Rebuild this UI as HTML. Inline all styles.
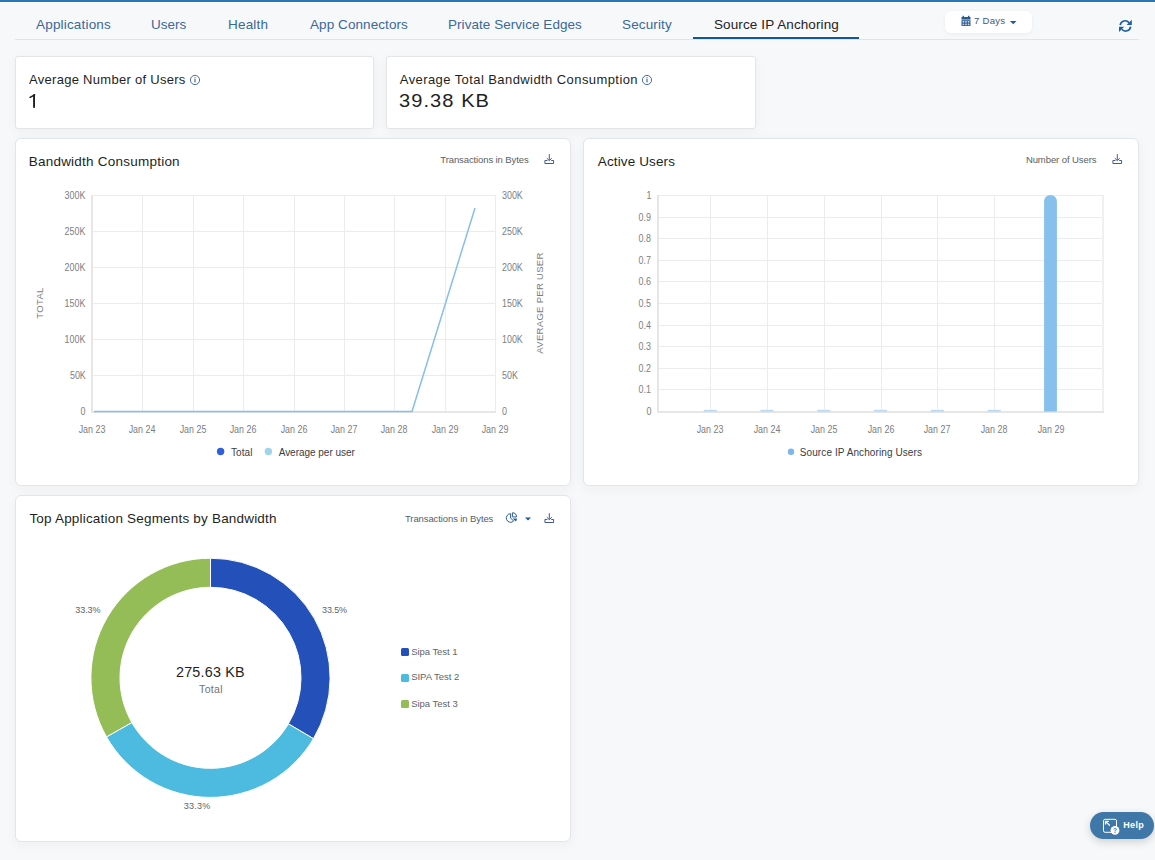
<!DOCTYPE html>
<html><head><meta charset="utf-8"><title>Source IP Anchoring</title>
<style>
html,body{margin:0;padding:0;}
body{width:1155px;height:860px;overflow:hidden;background:#f7f8fa;position:relative;font-family:'Liberation Sans', sans-serif;}
.t{position:absolute;white-space:nowrap;font-family:'Liberation Sans', sans-serif;}
.card{position:absolute;background:#fff;border:1px solid #e4e5e8;box-sizing:border-box;box-shadow:0 3px 12px rgba(30,40,50,0.045);}
svg{position:absolute;overflow:visible;}
</style></head><body>

<div style="position:absolute;left:0;top:0;width:1155px;height:2px;background:#2877b9"></div>
<div style="position:absolute;left:0;top:2px;width:1155px;height:1px;background:#ffffff"></div>
<div style="position:absolute;left:15px;top:39px;width:1124px;height:1px;background:#e1e3e6"></div>
<div style="position:absolute;left:693px;top:36px;width:166px;height:1px;background:#ffffff"></div>
<div style="position:absolute;left:693px;top:37px;width:166px;height:2px;background:#12559a"></div>
<div style="position:absolute;left:945px;top:11px;width:87px;height:22px;background:#fff;border-radius:6px;box-shadow:0 1px 4px rgba(0,0,0,0.05)"></div>
<svg style="left:961px;top:15px" width="10" height="12" viewBox="0 0 10 12">
<rect x="0.5" y="2" width="9" height="2.6" fill="#2a5a8f"/>
<rect x="1.6" y="0.8" width="1.4" height="2" fill="#2a5a8f"/><rect x="7" y="0.8" width="1.4" height="2" fill="#2a5a8f"/>
<rect x="0.5" y="5.2" width="9" height="5.8" fill="#2a5a8f"/>
<g fill="#c9d6e6"><rect x="1.6" y="6" width="1.6" height="1.6"/><rect x="4.2" y="6" width="1.6" height="1.6"/><rect x="6.8" y="6" width="1.6" height="1.6"/>
<rect x="1.6" y="8.6" width="1.6" height="1.6"/><rect x="4.2" y="8.6" width="1.6" height="1.6"/><rect x="6.8" y="8.6" width="1.6" height="1.6"/></g>
</svg>
<svg style="left:1010px;top:20px" width="7" height="5" viewBox="0 0 7 5"><path d="M0,1 L6.5,1 L3.25,4.2 Z" fill="#1f5a96"/></svg>
<svg style="left:1118px;top:19px" width="15" height="14" viewBox="0 0 15 14">
<path d="M2.2,6.2 A5,5 0 0 1 11,3.6" fill="none" stroke="#1d5f9f" stroke-width="1.7"/>
<path d="M13.8,0.8 L13.8,6 L8.6,6 Z" fill="#1d5f9f"/>
<path d="M12.6,7.6 A5,5 0 0 1 3.8,10.2" fill="none" stroke="#1d5f9f" stroke-width="1.7"/>
<path d="M1,13 L1,7.8 L6.2,7.8 Z" fill="#1d5f9f"/>
</svg>
<div class="card" style="left:15px;top:56px;width:359px;height:73px;border-radius:3px"></div>
<div class="card" style="left:386px;top:56px;width:370px;height:73px;border-radius:3px"></div>
<div class="card" style="left:15px;top:138px;width:556px;height:348px;border-radius:6px"></div>
<div class="card" style="left:583px;top:138px;width:556px;height:348px;border-radius:6px"></div>
<div class="card" style="left:15px;top:495px;width:556px;height:347px;border-radius:6px"></div>
<svg style="left:188.7px;top:74.2px" width="12" height="12" viewBox="0 0 12 12">
<circle cx="6" cy="6" r="4.6" fill="none" stroke="#35609a" stroke-width="0.9"/>
<rect x="5.45" y="5" width="1.1" height="3.4" fill="#35609a"/><rect x="5.45" y="3.3" width="1.1" height="1.1" fill="#35609a"/>
</svg>
<svg style="left:640.8px;top:74.2px" width="12" height="12" viewBox="0 0 12 12">
<circle cx="6" cy="6" r="4.6" fill="none" stroke="#35609a" stroke-width="0.9"/>
<rect x="5.45" y="5" width="1.1" height="3.4" fill="#35609a"/><rect x="5.45" y="3.3" width="1.1" height="1.1" fill="#35609a"/>
</svg>
<svg style="left:544px;top:154px" width="11" height="11" viewBox="0 0 11 11">
<path d="M5.3,0.2 L5.3,6.5 M2.8,4.2 L5.3,6.6 L7.8,4.2" fill="none" stroke="#3b4f91" stroke-width="0.95"/>
<path d="M3.4,6.5 L0.9,6.5 L0.9,9.5 L9.6,9.5 L9.6,6.5 L7.2,6.5" fill="none" stroke="#3b4f91" stroke-width="0.95"/>
</svg>
<svg style="left:1112px;top:154px" width="11" height="11" viewBox="0 0 11 11">
<path d="M5.3,0.2 L5.3,6.5 M2.8,4.2 L5.3,6.6 L7.8,4.2" fill="none" stroke="#3b4f91" stroke-width="0.95"/>
<path d="M3.4,6.5 L0.9,6.5 L0.9,9.5 L9.6,9.5 L9.6,6.5 L7.2,6.5" fill="none" stroke="#3b4f91" stroke-width="0.95"/>
</svg>
<svg style="left:544px;top:513px" width="11" height="11" viewBox="0 0 11 11">
<path d="M5.3,0.2 L5.3,6.5 M2.8,4.2 L5.3,6.6 L7.8,4.2" fill="none" stroke="#3b4f91" stroke-width="0.95"/>
<path d="M3.4,6.5 L0.9,6.5 L0.9,9.5 L9.6,9.5 L9.6,6.5 L7.2,6.5" fill="none" stroke="#3b4f91" stroke-width="0.95"/>
</svg>
<svg style="left:506px;top:511.5px" width="12" height="11" viewBox="0 0 12 11">
<path d="M4.6,1.7 A4.3,4.3 0 1 0 7.64,9.04 L4.6,6 Z" fill="none" stroke="#2d5d9a" stroke-width="1"/>
<path d="M6.4,0.8 L6.4,4.9 L10.5,4.9 A4.1,4.1 0 0 0 6.4,0.8 Z" fill="none" stroke="#2d5d9a" stroke-width="1"/>
<path d="M6.7,6.5 L11,6.5 A4.3,4.3 0 0 1 9.74,9.54 Z" fill="#2d5d9a"/>
</svg>
<svg style="left:525px;top:516.5px" width="7" height="5" viewBox="0 0 7 5"><path d="M0,0.5 L6,0.5 L3,3.5 Z" fill="#1f5a96"/></svg>
<svg style="left:0;top:0" width="1155" height="860" viewBox="0 0 1155 860">
<line x1="92" y1="195.5" x2="496" y2="195.5" stroke="#ececec" stroke-width="1"/>
<line x1="92" y1="231.5" x2="496" y2="231.5" stroke="#ececec" stroke-width="1"/>
<line x1="92" y1="267.5" x2="496" y2="267.5" stroke="#ececec" stroke-width="1"/>
<line x1="92" y1="303.5" x2="496" y2="303.5" stroke="#ececec" stroke-width="1"/>
<line x1="92" y1="339.5" x2="496" y2="339.5" stroke="#ececec" stroke-width="1"/>
<line x1="92" y1="375.5" x2="496" y2="375.5" stroke="#ececec" stroke-width="1"/>
<line x1="92" y1="411.5" x2="496" y2="411.5" stroke="#ececec" stroke-width="1"/>
<line x1="92.5" y1="195" x2="92.5" y2="412" stroke="#ececec" stroke-width="1"/>
<line x1="142.5" y1="195" x2="142.5" y2="412" stroke="#ececec" stroke-width="1"/>
<line x1="193.5" y1="195" x2="193.5" y2="412" stroke="#ececec" stroke-width="1"/>
<line x1="243.5" y1="195" x2="243.5" y2="412" stroke="#ececec" stroke-width="1"/>
<line x1="294.5" y1="195" x2="294.5" y2="412" stroke="#ececec" stroke-width="1"/>
<line x1="344.5" y1="195" x2="344.5" y2="412" stroke="#ececec" stroke-width="1"/>
<line x1="394.5" y1="195" x2="394.5" y2="412" stroke="#ececec" stroke-width="1"/>
<line x1="445.5" y1="195" x2="445.5" y2="412" stroke="#ececec" stroke-width="1"/>
<line x1="495.5" y1="195" x2="495.5" y2="412" stroke="#ececec" stroke-width="1"/>
<rect x="91" y="195" width="2" height="218" fill="#e6e6e6"/>
<rect x="91" y="411" width="405" height="2" fill="#e6e6e6"/>
<polyline points="94,411.5 412,411.5 475,208" fill="none" stroke="#86bfe9" stroke-width="1.5" stroke-linejoin="round"/>
<line x1="658" y1="195.5" x2="1104" y2="195.5" stroke="#ececec" stroke-width="1"/>
<line x1="658" y1="217.5" x2="1104" y2="217.5" stroke="#ececec" stroke-width="1"/>
<line x1="658" y1="238.5" x2="1104" y2="238.5" stroke="#ececec" stroke-width="1"/>
<line x1="658" y1="260.5" x2="1104" y2="260.5" stroke="#ececec" stroke-width="1"/>
<line x1="658" y1="281.5" x2="1104" y2="281.5" stroke="#ececec" stroke-width="1"/>
<line x1="658" y1="303.5" x2="1104" y2="303.5" stroke="#ececec" stroke-width="1"/>
<line x1="658" y1="325.5" x2="1104" y2="325.5" stroke="#ececec" stroke-width="1"/>
<line x1="658" y1="346.5" x2="1104" y2="346.5" stroke="#ececec" stroke-width="1"/>
<line x1="658" y1="368.5" x2="1104" y2="368.5" stroke="#ececec" stroke-width="1"/>
<line x1="658" y1="389.5" x2="1104" y2="389.5" stroke="#ececec" stroke-width="1"/>
<line x1="658" y1="411.5" x2="1104" y2="411.5" stroke="#ececec" stroke-width="1"/>
<line x1="710.5" y1="195" x2="710.5" y2="412" stroke="#ececec" stroke-width="1"/>
<line x1="767.5" y1="195" x2="767.5" y2="412" stroke="#ececec" stroke-width="1"/>
<line x1="824.5" y1="195" x2="824.5" y2="412" stroke="#ececec" stroke-width="1"/>
<line x1="881.5" y1="195" x2="881.5" y2="412" stroke="#ececec" stroke-width="1"/>
<line x1="937.5" y1="195" x2="937.5" y2="412" stroke="#ececec" stroke-width="1"/>
<line x1="994.5" y1="195" x2="994.5" y2="412" stroke="#ececec" stroke-width="1"/>
<line x1="1051.5" y1="195" x2="1051.5" y2="412" stroke="#ececec" stroke-width="1"/>
<rect x="1102" y="195" width="2" height="218" fill="#f0f0f0"/>
<rect x="657" y="195" width="2" height="218" fill="#e6e6e6"/>
<rect x="657" y="411" width="447" height="2" fill="#e6e6e6"/>
<rect x="703.7" y="409.8" width="13" height="1.8" fill="#bcdaf2"/>
<rect x="760.5" y="409.8" width="13" height="1.8" fill="#bcdaf2"/>
<rect x="817.3000000000001" y="409.8" width="13" height="1.8" fill="#bcdaf2"/>
<rect x="874.1" y="409.8" width="13" height="1.8" fill="#bcdaf2"/>
<rect x="930.9000000000001" y="409.8" width="13" height="1.8" fill="#bcdaf2"/>
<rect x="987.7" y="409.8" width="13" height="1.8" fill="#bcdaf2"/>
<path d="M1044.1,411.4 L1044.1,201.4 A6.4,6.4 0 0 1 1056.9,201.4 L1056.9,411.4 Z" fill="#85c1ec"/>
<circle cx="220.6" cy="451.5" r="3.7" fill="#2f5fdd"/>
<circle cx="268.4" cy="451.5" r="3.7" fill="#9fd4ea"/>
<circle cx="791" cy="451.8" r="3.2" fill="#7cb8e9"/>
<path d="M210.50,558.20 A119.6,119.6 0 0 1 313.44,738.68 L288.40,723.87 A90.5,90.5 0 0 0 210.50,587.30 Z" fill="#2451b9" stroke="#ffffff" stroke-width="1"/>
<path d="M313.44,738.68 A119.6,119.6 0 0 1 106.51,736.88 L131.81,722.50 A90.5,90.5 0 0 0 288.40,723.87 Z" fill="#4dbae0" stroke="#ffffff" stroke-width="1"/>
<path d="M106.51,736.88 A119.6,119.6 0 0 1 210.50,558.20 L210.50,587.30 A90.5,90.5 0 0 0 131.81,722.50 Z" fill="#95bd57" stroke="#ffffff" stroke-width="1"/>
<rect x="401" y="648" width="8" height="8" rx="1.5" fill="#2451b9"/>
<rect x="401" y="674" width="8" height="8" rx="1.5" fill="#4dbae0"/>
<rect x="401" y="700" width="8" height="8" rx="1.5" fill="#95bd57"/>
</svg>
<div style="position:absolute;left:1090px;top:812px;width:64px;height:27px;border-radius:14px;background:#3f77a9;box-shadow:0 3px 8px rgba(0,0,0,0.16)"></div>
<svg style="left:1102px;top:818px" width="18" height="18" viewBox="0 0 18 18">
<rect x="1.5" y="1.3" width="13" height="13" rx="1.6" fill="none" stroke="#fff" stroke-width="1"/>
<path d="M3.5,3.3 L7.8,7.6 M3.5,3.3 L3.5,6.6 M3.5,3.3 L6.8,3.3" fill="none" stroke="#fff" stroke-width="1.3"/>
<circle cx="13" cy="12.3" r="4.4" fill="#fff"/>
<text x="13" y="14.6" font-size="6.5" font-family="Liberation Sans" text-anchor="middle" fill="#3f77a9" font-weight="700">?</text>
</svg>
<svg style="left:0;top:0" width="60" height="120" viewBox="0 0 60 120"><rect x="33.1" y="94.3" width="1.9" height="13.5" fill="#1d1f22"/><path d="M30.1,97.4 L34.6,94.9" stroke="#1d1f22" stroke-width="1.6" stroke-linecap="round"/></svg>
<div class="t" style="left:36.00px;top:18.00px;font-size:13.5px;line-height:13.5px;letter-spacing:0.182px;color:#3b6898;font-weight:400">Applications</div>
<div class="t" style="left:151.00px;top:18.00px;font-size:13.5px;line-height:13.5px;letter-spacing:0.0px;color:#3b6898;font-weight:400">Users</div>
<div class="t" style="left:228.00px;top:18.00px;font-size:13.5px;line-height:13.5px;letter-spacing:0.2px;color:#3b6898;font-weight:400">Health</div>
<div class="t" style="left:310.00px;top:18.00px;font-size:13.5px;line-height:13.5px;letter-spacing:0.077px;color:#3b6898;font-weight:400">App Connectors</div>
<div class="t" style="left:448.00px;top:18.00px;font-size:13.5px;line-height:13.5px;letter-spacing:0.05px;color:#3b6898;font-weight:400">Private Service Edges</div>
<div class="t" style="left:622.00px;top:18.00px;font-size:13.5px;line-height:13.5px;letter-spacing:0.143px;color:#3b6898;font-weight:400">Security</div>
<div class="t" style="left:714.00px;top:18.00px;font-size:13.5px;line-height:13.5px;letter-spacing:0.111px;color:#1f2226;font-weight:400">Source IP Anchoring</div>
<div class="t" style="left:974.00px;top:16.10px;font-size:9.5px;line-height:9.5px;letter-spacing:0.3px;color:#3b5a85;font-weight:400">7 Days</div>
<div class="t" style="left:29.00px;top:72.90px;font-size:13px;line-height:13px;letter-spacing:0.286px;color:#1d1f22;font-weight:400">Average Number of Users</div>
<div class="t" style="left:399.80px;top:72.90px;font-size:13px;line-height:13px;letter-spacing:0.418px;color:#1d1f22;font-weight:400">Average Total Bandwidth Consumption</div>
<div class="t" style="left:399.42px;top:92.30px;font-size:18.5px;line-height:18.5px;letter-spacing:0.978px;color:#1d1f22;font-weight:400;transform:scaleX(1.0847);transform-origin:0 0">39.38 KB</div>
<div class="t" style="left:28.70px;top:154.70px;font-size:13.5px;line-height:13.5px;letter-spacing:0.23px;color:#1d1f22;font-weight:400">Bandwidth Consumption</div>
<div class="t" style="left:440.30px;top:154.90px;font-size:9.5px;line-height:9.5px;letter-spacing:-0.105px;color:#5a5e63;font-weight:400">Transactions in Bytes</div>
<div class="t" style="left:597.80px;top:154.70px;font-size:13.5px;line-height:13.5px;letter-spacing:0.127px;color:#1d1f22;font-weight:400">Active Users</div>
<div class="t" style="left:1025.90px;top:154.90px;font-size:9.5px;line-height:9.5px;letter-spacing:-0.086px;color:#5a5e63;font-weight:400">Number of Users</div>
<div class="t" style="left:29.40px;top:511.70px;font-size:13.5px;line-height:13.5px;letter-spacing:0.194px;color:#1d1f22;font-weight:400">Top Application Segments by Bandwidth</div>
<div class="t" style="left:405.00px;top:513.90px;font-size:9.5px;line-height:9.5px;letter-spacing:-0.105px;color:#5a5e63;font-weight:400">Transactions in Bytes</div>
<div class="t" style="left:230.90px;top:447.70px;font-size:10.0px;line-height:10.0px;letter-spacing:0.1px;color:#3a3d42;font-weight:400">Total</div>
<div class="t" style="left:278.70px;top:447.70px;font-size:10.0px;line-height:10.0px;letter-spacing:-0.027px;color:#3a3d42;font-weight:400">Average per user</div>
<div class="t" style="left:799.80px;top:447.90px;font-size:10.0px;line-height:10.0px;letter-spacing:0.092px;color:#3a3d42;font-weight:400">Source IP Anchoring Users</div>
<div class="t" style="left:176.18px;top:664.90px;font-size:14px;line-height:14px;letter-spacing:0.200px;color:#1d1f22;font-weight:400;transform:scaleX(1.0244);transform-origin:0 0">275.63 KB</div>
<div class="t" style="left:199.10px;top:683.90px;font-size:10.5px;line-height:10.5px;letter-spacing:0.3px;color:#707378;font-weight:400">Total</div>
<div class="t" style="left:411.20px;top:647.00px;font-size:9.5px;line-height:9.5px;letter-spacing:-0.05px;color:#606368;font-weight:400">Sipa Test 1</div>
<div class="t" style="left:411.20px;top:672.00px;font-size:9.5px;line-height:9.5px;letter-spacing:-0.02px;color:#606368;font-weight:400">SIPA Test 2</div>
<div class="t" style="left:411.20px;top:699.00px;font-size:9.5px;line-height:9.5px;letter-spacing:-0.02px;color:#606368;font-weight:400">Sipa Test 3</div>
<div class="t" style="left:75.20px;top:605.90px;font-size:9px;line-height:9px;letter-spacing:-0.025px;color:#606368;font-weight:400">33.3%</div>
<div class="t" style="left:322.00px;top:605.90px;font-size:9px;line-height:9px;letter-spacing:-0.1px;color:#606368;font-weight:400">33.5%</div>
<div class="t" style="left:183.80px;top:802.00px;font-size:9px;line-height:9px;letter-spacing:0.25px;color:#606368;font-weight:400">33.3%</div>
<div class="t" style="left:1123.20px;top:821.20px;font-size:9.0px;line-height:9.0px;letter-spacing:0.367px;color:#ffffff;font-weight:700">Help</div>
<div class="t" style="right:1069.20px;top:190.90px;font-size:10px;line-height:10px;color:#7b7e83;text-align:right;transform:scaleX(0.89);transform-origin:100% 50%">300K</div>
<div class="t" style="left:501.50px;top:190.90px;font-size:10px;line-height:10px;color:#7b7e83;transform:scaleX(0.89);transform-origin:0 50%">300K</div>
<div class="t" style="right:1069.20px;top:226.90px;font-size:10px;line-height:10px;color:#7b7e83;text-align:right;transform:scaleX(0.89);transform-origin:100% 50%">250K</div>
<div class="t" style="left:501.50px;top:226.90px;font-size:10px;line-height:10px;color:#7b7e83;transform:scaleX(0.89);transform-origin:0 50%">250K</div>
<div class="t" style="right:1069.20px;top:262.90px;font-size:10px;line-height:10px;color:#7b7e83;text-align:right;transform:scaleX(0.89);transform-origin:100% 50%">200K</div>
<div class="t" style="left:501.50px;top:262.90px;font-size:10px;line-height:10px;color:#7b7e83;transform:scaleX(0.89);transform-origin:0 50%">200K</div>
<div class="t" style="right:1069.20px;top:298.90px;font-size:10px;line-height:10px;color:#7b7e83;text-align:right;transform:scaleX(0.89);transform-origin:100% 50%">150K</div>
<div class="t" style="left:501.50px;top:298.90px;font-size:10px;line-height:10px;color:#7b7e83;transform:scaleX(0.89);transform-origin:0 50%">150K</div>
<div class="t" style="right:1069.20px;top:334.90px;font-size:10px;line-height:10px;color:#7b7e83;text-align:right;transform:scaleX(0.89);transform-origin:100% 50%">100K</div>
<div class="t" style="left:501.50px;top:334.90px;font-size:10px;line-height:10px;color:#7b7e83;transform:scaleX(0.89);transform-origin:0 50%">100K</div>
<div class="t" style="right:1069.20px;top:370.90px;font-size:10px;line-height:10px;color:#7b7e83;text-align:right;transform:scaleX(0.89);transform-origin:100% 50%">50K</div>
<div class="t" style="left:501.50px;top:370.90px;font-size:10px;line-height:10px;color:#7b7e83;transform:scaleX(0.89);transform-origin:0 50%">50K</div>
<div class="t" style="right:1069.20px;top:406.90px;font-size:10px;line-height:10px;color:#7b7e83;text-align:right;transform:scaleX(0.89);transform-origin:100% 50%">0</div>
<div class="t" style="left:501.50px;top:406.90px;font-size:10px;line-height:10px;color:#7b7e83;transform:scaleX(0.89);transform-origin:0 50%">0</div>
<div class="t" style="left:42.00px;width:100px;top:424.70px;font-size:10px;line-height:10px;color:#7b7e83;text-align:center;transform:scaleX(0.89);transform-origin:50% 50%">Jan 23</div>
<div class="t" style="left:92.38px;width:100px;top:424.70px;font-size:10px;line-height:10px;color:#7b7e83;text-align:center;transform:scaleX(0.89);transform-origin:50% 50%">Jan 24</div>
<div class="t" style="left:142.75px;width:100px;top:424.70px;font-size:10px;line-height:10px;color:#7b7e83;text-align:center;transform:scaleX(0.89);transform-origin:50% 50%">Jan 25</div>
<div class="t" style="left:193.12px;width:100px;top:424.70px;font-size:10px;line-height:10px;color:#7b7e83;text-align:center;transform:scaleX(0.89);transform-origin:50% 50%">Jan 26</div>
<div class="t" style="left:243.50px;width:100px;top:424.70px;font-size:10px;line-height:10px;color:#7b7e83;text-align:center;transform:scaleX(0.89);transform-origin:50% 50%">Jan 26</div>
<div class="t" style="left:293.88px;width:100px;top:424.70px;font-size:10px;line-height:10px;color:#7b7e83;text-align:center;transform:scaleX(0.89);transform-origin:50% 50%">Jan 27</div>
<div class="t" style="left:344.25px;width:100px;top:424.70px;font-size:10px;line-height:10px;color:#7b7e83;text-align:center;transform:scaleX(0.89);transform-origin:50% 50%">Jan 28</div>
<div class="t" style="left:394.62px;width:100px;top:424.70px;font-size:10px;line-height:10px;color:#7b7e83;text-align:center;transform:scaleX(0.89);transform-origin:50% 50%">Jan 29</div>
<div class="t" style="left:445.00px;width:100px;top:424.70px;font-size:10px;line-height:10px;color:#7b7e83;text-align:center;transform:scaleX(0.89);transform-origin:50% 50%">Jan 29</div>
<div class="t" style="right:503.80px;top:190.90px;font-size:10px;line-height:10px;color:#7b7e83;text-align:right;transform:scaleX(0.89);transform-origin:100% 50%">1</div>
<div class="t" style="right:503.80px;top:212.50px;font-size:10px;line-height:10px;color:#7b7e83;text-align:right;transform:scaleX(0.89);transform-origin:100% 50%">0.9</div>
<div class="t" style="right:503.80px;top:234.10px;font-size:10px;line-height:10px;color:#7b7e83;text-align:right;transform:scaleX(0.89);transform-origin:100% 50%">0.8</div>
<div class="t" style="right:503.80px;top:255.70px;font-size:10px;line-height:10px;color:#7b7e83;text-align:right;transform:scaleX(0.89);transform-origin:100% 50%">0.7</div>
<div class="t" style="right:503.80px;top:277.30px;font-size:10px;line-height:10px;color:#7b7e83;text-align:right;transform:scaleX(0.89);transform-origin:100% 50%">0.6</div>
<div class="t" style="right:503.80px;top:298.90px;font-size:10px;line-height:10px;color:#7b7e83;text-align:right;transform:scaleX(0.89);transform-origin:100% 50%">0.5</div>
<div class="t" style="right:503.80px;top:320.50px;font-size:10px;line-height:10px;color:#7b7e83;text-align:right;transform:scaleX(0.89);transform-origin:100% 50%">0.4</div>
<div class="t" style="right:503.80px;top:342.10px;font-size:10px;line-height:10px;color:#7b7e83;text-align:right;transform:scaleX(0.89);transform-origin:100% 50%">0.3</div>
<div class="t" style="right:503.80px;top:363.70px;font-size:10px;line-height:10px;color:#7b7e83;text-align:right;transform:scaleX(0.89);transform-origin:100% 50%">0.2</div>
<div class="t" style="right:503.80px;top:385.30px;font-size:10px;line-height:10px;color:#7b7e83;text-align:right;transform:scaleX(0.89);transform-origin:100% 50%">0.1</div>
<div class="t" style="right:503.80px;top:406.90px;font-size:10px;line-height:10px;color:#7b7e83;text-align:right;transform:scaleX(0.89);transform-origin:100% 50%">0</div>
<div class="t" style="left:660.20px;width:100px;top:424.70px;font-size:10px;line-height:10px;color:#7b7e83;text-align:center;transform:scaleX(0.89);transform-origin:50% 50%">Jan 23</div>
<div class="t" style="left:717.00px;width:100px;top:424.70px;font-size:10px;line-height:10px;color:#7b7e83;text-align:center;transform:scaleX(0.89);transform-origin:50% 50%">Jan 24</div>
<div class="t" style="left:773.80px;width:100px;top:424.70px;font-size:10px;line-height:10px;color:#7b7e83;text-align:center;transform:scaleX(0.89);transform-origin:50% 50%">Jan 25</div>
<div class="t" style="left:830.60px;width:100px;top:424.70px;font-size:10px;line-height:10px;color:#7b7e83;text-align:center;transform:scaleX(0.89);transform-origin:50% 50%">Jan 26</div>
<div class="t" style="left:887.40px;width:100px;top:424.70px;font-size:10px;line-height:10px;color:#7b7e83;text-align:center;transform:scaleX(0.89);transform-origin:50% 50%">Jan 27</div>
<div class="t" style="left:944.20px;width:100px;top:424.70px;font-size:10px;line-height:10px;color:#7b7e83;text-align:center;transform:scaleX(0.89);transform-origin:50% 50%">Jan 28</div>
<div class="t" style="left:1001.00px;width:100px;top:424.70px;font-size:10px;line-height:10px;color:#7b7e83;text-align:center;transform:scaleX(0.89);transform-origin:50% 50%">Jan 29</div>
<div class="t" style="left:-10.5px;top:298.4px;width:100px;text-align:center;font-size:9.5px;line-height:10px;letter-spacing:0.3px;color:#7b7e83;transform:rotate(-90deg)">TOTAL</div>
<div class="t" style="left:479.70000000000005px;top:298.1px;width:120px;text-align:center;font-size:9.5px;line-height:10px;letter-spacing:0.3px;color:#7b7e83;transform:rotate(-90deg)">AVERAGE PER USER</div>
</body></html>
